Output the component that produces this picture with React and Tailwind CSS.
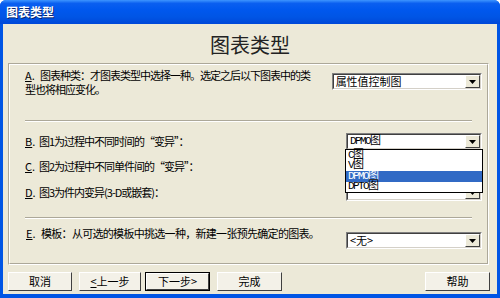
function Arrow() {
  return (
    <div className="flex w-[15px] items-center justify-center border border-t-white border-l-white border-b-[#404040] border-r-[#404040] bg-[#ECE9D8]">
      <svg width="7" height="4" viewBox="0 0 7 4">
        <path d="M0 0h7L3.5 4z" fill="#000" />
      </svg>
    </div>
  );
}

function Combo({ className, children }) {
  return (
    <div className={`relative flex h-[17px] border border-t-[#808080] border-l-[#808080] border-b-white border-r-white ${className}`}>
      <div className="flex flex-1 border border-t-[#404040] border-l-[#404040] border-b-[#D4D0C8] border-r-[#D4D0C8] bg-white">
        <div className="flex flex-1 items-center whitespace-nowrap pl-[2px] leading-none text-black">
          {children}
        </div>
        <Arrow />
      </div>
    </div>
  );
}

function Btn({ className, children, primary }) {
  return (
    <div className={`h-[19px] ${primary ? 'border border-black' : ''} ${className}`}>
      <div className="flex h-full items-center justify-center border border-t-white border-l-white border-b-[#404040] border-r-[#404040] bg-[#F3F1E8] text-[11px] text-black">
        {children}
      </div>
    </div>
  );
}

function Sep() {
  return <div className="mx-[15px] h-0 border-t border-b border-t-[#ACA899] border-b-white" />;
}

const items = ['C图', 'V图', 'DPMO图', 'DPTO图'];

export default function App() {
  return (
    <div className="h-[298px] w-[500px] bg-white font-['Noto_Sans_CJK_SC',sans-serif]">
      <div className="flex h-full flex-col overflow-hidden rounded-t-[6px] bg-[#0055E5]">
        {/* 标题栏 */}
        <div className="flex h-[24px] items-center bg-[linear-gradient(to_bottom,#3D95FF_0%,#0A5FF0_14%,#0058EE_40%,#0055E5_70%,#0048D8_100%)] pl-[6px] text-[12px] font-bold text-white [text-shadow:1px_1px_0_#0A246A]">
          图表类型
        </div>

        <div className="mx-[3px] mb-[4px] flex flex-1 flex-col bg-[#ECE9D8]">
          <div className="flex h-[39px] items-center justify-center pt-[2px] text-[20px] leading-none text-[#222]">
            图表类型
          </div>

          {/* 内容面板 */}
          <div className="ml-[5px] mr-[8px] h-[202px] border border-[#ACA899] border-r-white border-b-white">
            <div className="flex h-full flex-col border border-white border-r-[#ACA899] border-b-[#ACA899] text-[11px] text-black">
              <div className="mt-[3px] flex items-start justify-between pl-[15px] pr-[5px]">
                <p className="w-[310px] leading-[14px] tracking-[-1px]">
                  <span className="inline-block w-[15px] tracking-normal"><span className="underline">A</span>.</span>
                  图表种类：才图表类型中选择一种。选定之后以下图表中的类
                  <br />
                  型也将相应变化。
                </p>
                <Combo className="mt-[5px] w-[152px]">属性值控制图</Combo>
              </div>

              <div className="mt-[24px]">
                <Sep />
              </div>

              <div className="mt-[11px] flex h-[17px] items-center justify-between pl-[15px] pr-[5px]">
                <span className="tracking-[-1px]">
                  <span className="inline-block w-[14px] tracking-normal"><span className="underline">B</span>.</span>
                  图1为过程中不同时间的“变异”：
                </span>
                <Combo className="z-10 w-[136px] font-['Liberation_Mono','Noto_Sans_CJK_SC',monospace] text-[11px] tracking-[-1.6px]">
                  DPMO图
                  <div className="absolute left-[-2px] right-[-2px] top-[15px] border border-black bg-white">
                    {items.map((it) => (
                      <div
                        key={it}
                        className={`flex h-[10.5px] items-center pl-[2px] leading-none ${it === 'DPMO图' ? 'bg-[#316AC5] text-white' : 'text-black'}`}
                      >
                        {it}
                      </div>
                    ))}
                  </div>
                </Combo>
              </div>

              <div className="mt-[8px] flex h-[17px] items-center justify-between pl-[15px] pr-[5px]">
                <span className="tracking-[-1px]">
                  <span className="inline-block w-[14px] tracking-normal"><span className="underline">C</span>.</span>
                  图2为过程中不同单件间的“变异”：
                </span>
                <Combo className="w-[136px]" />
              </div>

              <div className="mt-[9px] flex h-[17px] items-center justify-between pl-[15px] pr-[5px]">
                <span className="tracking-[-1px]">
                  <span className="inline-block w-[14px] tracking-normal"><span className="underline">D</span>.</span>
                  图3为件内变异(3-D或嵌套)：
                </span>
                <Combo className="w-[136px]" />
              </div>

              <div className="mt-[16px]">
                <Sep />
              </div>

              <div className="mt-[13px] flex h-[17px] items-start justify-between pl-[16px] pr-[5px]">
                <span className="-mt-[5px] leading-[13px] tracking-[-0.7px]">
                  <span className="inline-block w-[15px] tracking-normal"><span className="underline">E</span>.</span>
                  模板：从可选的模板中挑选一种，新建一张预先确定的图表。
                </span>
                <Combo className="w-[136px]">&lt;无&gt;</Combo>
              </div>
            </div>
          </div>

          {/* 底部按钮 */}
          <div className="mt-[7px] flex pl-[5px] pr-[7px]">
            <Btn className="w-[64px]">取消</Btn>
            <Btn className="ml-[7px] w-[62px]">
              <span className="underline">&lt;</span>上一步
            </Btn>
            <Btn primary className="ml-[4px] w-[65px]">下一步&gt;</Btn>
            <Btn className="ml-[7px] w-[65px]">完成</Btn>
            <Btn className="ml-auto w-[65px]">帮助</Btn>
          </div>
        </div>
      </div>
    </div>
  );
}
